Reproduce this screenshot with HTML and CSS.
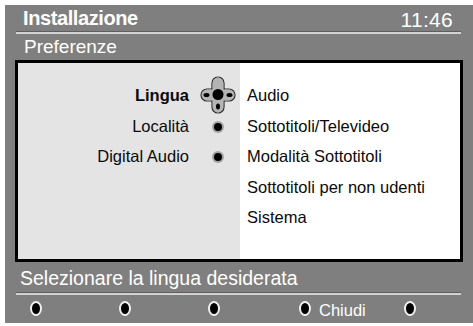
FILE: index.html
```html
<!DOCTYPE html>
<html lang="it">
<head>
<meta charset="utf-8">
<title>Installazione</title>
<link rel="stylesheet" href="styles.css">
</head>
<body>
<div class="screen">
  <header class="head">
    <span class="title">Installazione</span>
    <span class="clock">11:46</span>
  </header>
  <div class="rule"></div>
  <div class="sub">Preferenze</div>
  <div class="box">
    <div class="pane-left">
      <div class="row">
        <span class="label strong">Lingua</span>
        <span class="mark">
          <svg class="cross" viewBox="0 0 36 38" width="36" height="38">
            <g fill="#b4b4b4" stroke="#2a2a2a" stroke-width="1.2">
              <rect x="1" y="13" width="34" height="12" rx="6"/>
              <rect x="12" y="1" width="12" height="36" rx="6"/>
            </g>
            <rect x="1.6" y="13.6" width="32.8" height="10.8" rx="5.4" fill="#b4b4b4"/>
            <rect x="12.6" y="1.6" width="10.8" height="34.8" rx="5.4" fill="#b4b4b4"/>
            <circle cx="18" cy="18.5" r="5.5" fill="#000"/>
            <ellipse cx="6.5" cy="19" rx="3" ry="2" fill="#000"/>
            <ellipse cx="29.5" cy="19" rx="3" ry="2" fill="#000"/>
            <ellipse cx="18" cy="30.5" rx="2" ry="3" fill="#000"/>
          </svg>
        </span>
      </div>
      <div class="row">
        <span class="label">Località</span>
        <span class="mark"><span class="dot"></span></span>
      </div>
      <div class="row">
        <span class="label">Digital Audio</span>
        <span class="mark"><span class="dot"></span></span>
      </div>
    </div>
    <div class="pane-right">
      <div class="item">Audio</div>
      <div class="item">Sottotitoli/Televideo</div>
      <div class="item">Modalità Sottotitoli</div>
      <div class="item">Sottotitoli per non udenti</div>
      <div class="item">Sistema</div>
    </div>
  </div>
  <div class="hint">Selezionare la lingua desiderata</div>
  <div class="rule"></div>
  <div class="keys">
    <div class="key"><span class="oval"></span></div>
    <div class="key"><span class="oval"></span></div>
    <div class="key"><span class="oval"></span></div>
    <div class="key"><span class="oval"></span><span class="key-label">Chiudi</span></div>
    <div class="key"><span class="oval"></span></div>
  </div>
</div>
</body>
</html>
```

FILE: styles.css
```css
* {
  box-sizing: border-box;
}

body {
  margin: 0;
  background: #fff;
  font-family: "Liberation Sans", Arial, sans-serif;
}

.screen {
  margin: 5px 0 0 5px;
  width: 468px;
  height: 318px;
  background: #7f7f7f;
  color: #fff;
  display: flex;
  flex-direction: column;
}

.head {
  display: flex;
  justify-content: space-between;
  align-items: flex-start;
  height: 26px;
  padding: 0 20px 0 18px;
}

.title {
  font-weight: 700;
  font-size: 20px;
  line-height: 26px;
  letter-spacing: -0.4px;
}

.clock {
  font-size: 21px;
  line-height: 26px;
  margin-top: 2px;
  letter-spacing: 0.3px;
}

.rule {
  height: 3px;
  margin: 0 12px 0 11px;
  background: #d2d2d2;
  border-top: 1px solid #5e5e5e;
  flex-shrink: 0;
}

.sub {
  height: 26px;
  font-size: 19px;
  line-height: 26px;
  padding-left: 19px;
}

.box {
  margin-left: 10px;
  width: 448px;
  height: 202px;
  border: 3px solid #000;
  display: flex;
  flex-shrink: 0;
  color: #0a0a0a;
}

.pane-left {
  width: 222px;
  background: #e4e4e4;
  padding: 17px 4px 0 0;
}

.row {
  display: flex;
  justify-content: flex-end;
  align-items: center;
  height: 30.5px;
}

.label {
  font-size: 16.5px;
  line-height: 30.5px;
  margin-right: 11px;
}

.label.strong {
  font-weight: 700;
}

.mark {
  width: 36px;
  height: 30.5px;
  display: flex;
  justify-content: center;
  align-items: center;
}

.cross {
  flex-shrink: 0;
  margin: -4px 0;
}

.dot {
  width: 8px;
  height: 8px;
  margin-top: 2px;
  border-radius: 50%;
  background: #000;
  box-shadow: 0 0 0 2px #a4a4a4;
}

.pane-right {
  flex: 1;
  background: #fff;
  padding: 17px 0 0 7px;
}

.item {
  font-size: 16.5px;
  line-height: 30.5px;
  white-space: nowrap;
}

.hint {
  height: 30px;
  font-size: 19.5px;
  line-height: 28px;
  padding: 2px 0 0 15px;
  flex-shrink: 0;
}

.keys {
  display: grid;
  grid-template-columns: 89px 89px 91px 105px auto;
  align-items: center;
  height: 28px;
  padding-left: 25px;
}

.key {
  display: flex;
  align-items: center;
  gap: 8px;
}

.oval {
  width: 12px;
  height: 15px;
  margin-top: -1px;
  border-radius: 50%;
  background: #000;
  border: 2.5px solid #efefef;
  flex-shrink: 0;
}

.key-label {
  font-size: 16.5px;
  line-height: 18px;
  margin-top: 2px;
}
```
